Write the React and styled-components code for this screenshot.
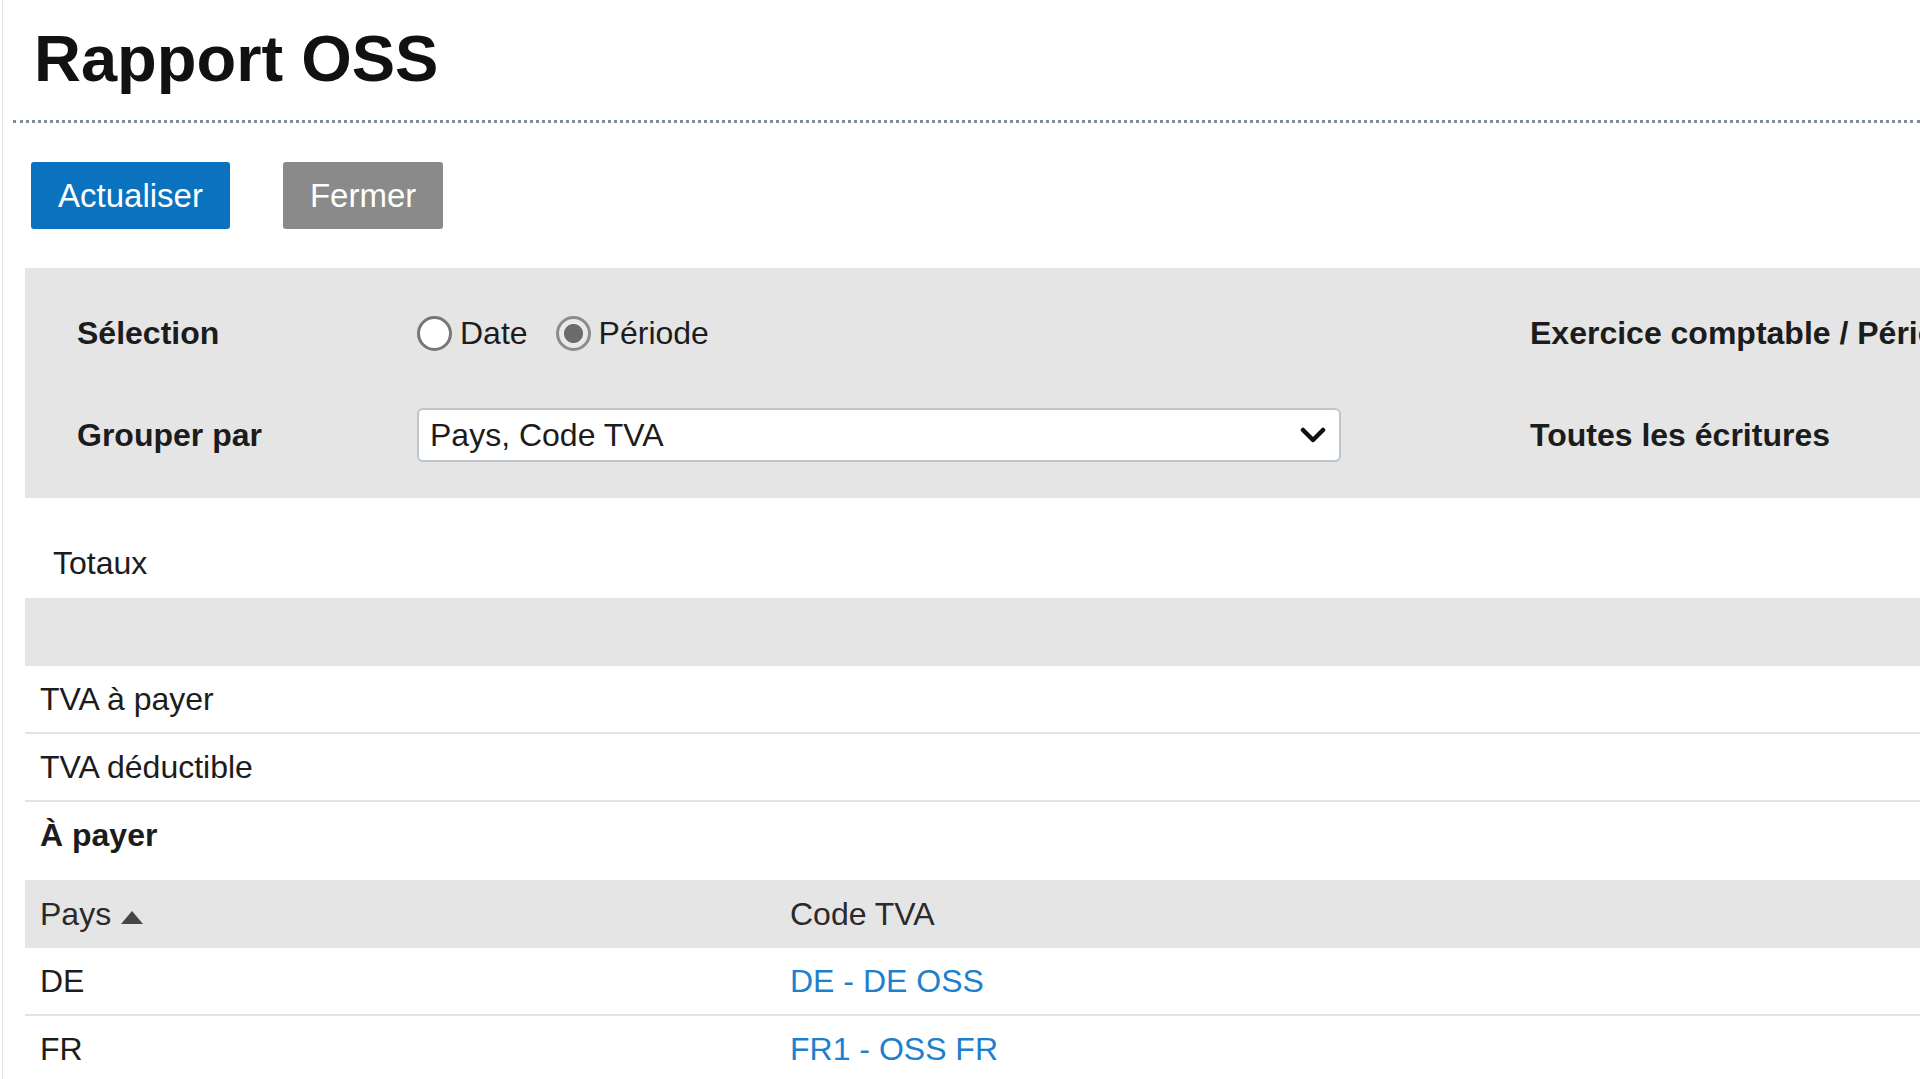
import React from "react";
import styled, { createGlobalStyle } from "styled-components";

const GlobalStyle = createGlobalStyle`
  html, body {
    margin: 0;
    padding: 0;
    overflow: hidden;
    background: #ffffff;
  }
  body {
    font-family: "Liberation Sans", Arial, sans-serif;
    color: #1f1f1f;
  }
`;

const totals = ["TVA à payer", "TVA déductible", "À payer"];

const lines = [
  { pays: "DE", code: "DE - DE OSS" },
  { pays: "FR", code: "FR1 - OSS FR" },
];

function Radio({ label, checked }) {
  return (
    <RadioOption>
      <RadioCircle $checked={checked} />
      <span>{label}</span>
    </RadioOption>
  );
}

function App() {
  return (
    <>
      <GlobalStyle />
      <Page>
        <Title>Rapport OSS</Title>
        <Divider />

        <Toolbar>
          <Button $variant="primary">Actualiser</Button>
          <Button $variant="secondary">Fermer</Button>
        </Toolbar>

        <FilterPanel>
          <FieldLabel>Sélection</FieldLabel>
          <RadioGroup>
            <Radio label="Date" />
            <Radio label="Période" checked />
          </RadioGroup>
          <SideLabel>Exercice comptable / Période</SideLabel>

          <FieldLabel>Grouper par</FieldLabel>
          <SelectBox>
            <span>Pays, Code TVA</span>
            <svg width="26" height="17" viewBox="0 0 26 17">
              <polyline
                points="3,3 13,13 23,3"
                fill="none"
                stroke="#111"
                strokeWidth="4.5"
                strokeLinecap="round"
                strokeLinejoin="round"
              />
            </svg>
          </SelectBox>
          <SideLabel>Toutes les écritures</SideLabel>
        </FilterPanel>

        <Caption>Totaux</Caption>
        <Table>
          <HeadRow />
          {totals.map((t, i) => (
            <Row key={t} $last={i === totals.length - 1}>
              <Cell $bold={i === totals.length - 1}>{t}</Cell>
            </Row>
          ))}
        </Table>

        <Table $gap>
          <HeadRow>
            <Cell>
              Pays <SortArrow />
            </Cell>
            <Cell>Code TVA</Cell>
          </HeadRow>
          {lines.map((l) => (
            <Row key={l.pays}>
              <Cell>{l.pays}</Cell>
              <Cell>
                <Link href="#">{l.code}</Link>
              </Cell>
            </Row>
          ))}
        </Table>
      </Page>
    </>
  );
}

const Page = styled.div`
  margin-left: 2px;
  border-left: 1px solid #e3e3e3;
  min-height: 1079px;
`;

const Title = styled.h1`
  margin: 0;
  padding: 21px 0 0 31px;
  font-size: 65px;
  line-height: 76px;
  font-weight: bold;
  color: #111;
`;

const Divider = styled.div`
  margin: 23px 0 0 10px;
  border-top: 3px dotted #7f8c99;
`;

const Toolbar = styled.div`
  display: flex;
  gap: 53px;
  margin: 39px 0 0 28px;
`;

const Button = styled.button`
  height: 67px;
  padding: 0 27px;
  border: none;
  border-radius: 3px;
  font-family: "Liberation Sans", Arial, sans-serif;
  font-size: 33px;
  color: #ffffff;
  background: ${(p) => (p.$variant === "primary" ? "#0a72bf" : "#8a8a8a")};
  cursor: pointer;
`;

const FilterPanel = styled.div`
  display: grid;
  grid-template-columns: 340px 1113px 1fr;
  grid-template-rows: 50px 54px;
  row-gap: 50px;
  align-items: center;
  margin: 39px 0 0 22px;
  padding: 40px 0 36px 52px;
  background: #e5e5e5;
  font-size: 32px;
`;

const FieldLabel = styled.div`
  font-weight: bold;
  color: #1c1c1c;
`;

const SideLabel = styled.div`
  font-weight: bold;
  color: #1c1c1c;
  white-space: nowrap;
`;

const RadioGroup = styled.div`
  display: flex;
  align-items: center;
  gap: 28px;
`;

const RadioOption = styled.label`
  display: flex;
  align-items: center;
  gap: 8px;
  color: #1c1c1c;
`;

const RadioCircle = styled.span`
  box-sizing: border-box;
  width: 35px;
  height: 35px;
  border-radius: 50%;
  border: 3px solid #7a7a7a;
  background: ${(p) =>
    p.$checked
      ? "radial-gradient(circle, #6b6b6b 0 9px, #e9e9e9 10px)"
      : "#ffffff"};
  border-color: ${(p) => (p.$checked ? "#8c8c8c" : "#777777")};
`;

const SelectBox = styled.div`
  box-sizing: border-box;
  width: 924px;
  height: 54px;
  display: flex;
  align-items: center;
  justify-content: space-between;
  padding: 0 13px 0 11px;
  background: #ffffff;
  border: 2px solid #bcc6ce;
  border-radius: 6px;
  color: #1c1c1c;
`;

const Caption = styled.div`
  padding: 47px 0 16px 50px;
  font-size: 32px;
  line-height: 37px;
  color: #1c1c1c;
`;

const Table = styled.div`
  margin: ${(p) => (p.$gap ? "12px" : "0")} 0 0 22px;
  font-size: 32px;
`;

const HeadRow = styled.div`
  display: grid;
  grid-template-columns: 750px 1fr;
  align-items: center;
  height: 68px;
  background: #e5e5e5;
  color: #2a2a2a;
`;

const Row = styled.div`
  display: grid;
  grid-template-columns: 750px 1fr;
  align-items: center;
  height: 66px;
  border-bottom: ${(p) => (p.$last ? "none" : "2px solid #e3e3e3")};
  color: #1c1c1c;
`;

const Cell = styled.div`
  padding-left: 15px;
  font-weight: ${(p) => (p.$bold ? "bold" : "normal")};
  display: flex;
  align-items: center;
`;

const SortArrow = styled.span`
  display: inline-block;
  margin-left: 10px;
  margin-top: 6px;
  width: 0;
  height: 0;
  border-left: 11px solid transparent;
  border-right: 11px solid transparent;
  border-bottom: 13px solid #454545;
`;

const Link = styled.a`
  color: #1e7fcc;
  text-decoration: none;
`;

export default App;
